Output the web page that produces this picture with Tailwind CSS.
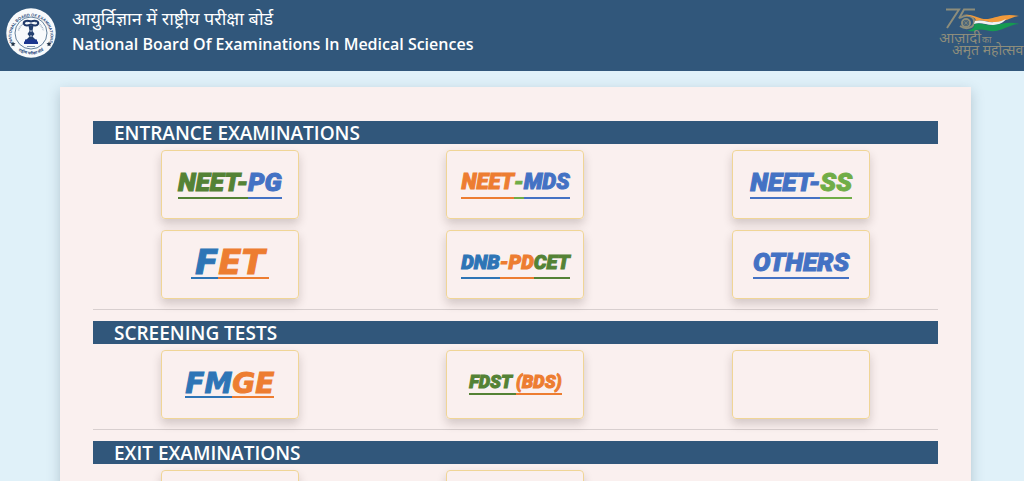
<!DOCTYPE html>
<html lang="en">
<head>
<meta charset="utf-8">
<meta name="viewport" content="width=device-width, initial-scale=1">
<title>National Board Of Examinations In Medical Sciences</title>
<script src="https://cdn.jsdelivr.net/npm/@tailwindcss/browser@4"></script>
</head>
<body class="bg-[#e0f1f9] font-['Open_Sans','Noto_Sans',sans-serif]">
<header class="flex h-[71px] items-start justify-between overflow-hidden bg-[#31577b] text-white">
  <div class="flex items-start gap-4 pl-1.5">
    <svg class="mt-2 size-[50px] shrink-0" viewBox="0 0 100 100" role="img" aria-label="NBEMS emblem">
      <defs>
        <path id="ringTop" d="M16 75A39 39 0 1 1 84 75"/>
        <path id="ringBottom" d="M20 81A44 44 0 0 0 80 81"/>
      </defs>
      <circle cx="50" cy="50" r="49.500" fill="#f8fafc"/>
      <circle cx="50" cy="50" r="32" fill="none" stroke="#31577b" stroke-width="1.500"/>
      <path d="M25 45A26 26 0 0 1 75 45" fill="none" stroke="#9fb0c4" stroke-width="3" stroke-dasharray="2 1.500"/>
      <g fill="#26477a" font-weight="700">
        <text font-size="8" font-family="Liberation Sans, sans-serif"><textPath href="#ringTop" startOffset="50%" text-anchor="middle">NATIONAL BOARD OF EXAMINATIONS</textPath></text>
        <text font-size="8" font-family="Noto Sans, sans-serif"><textPath href="#ringBottom" startOffset="50%" text-anchor="middle">राष्ट्रीय परीक्षा बोर्ड</textPath></text>
      </g>
      <path d="M14 67l1.500 3 3.500.5-2.500 2.500.5 3.500-3-1.500-3 1.500.5-3.500L9 70.500l3.500-.5zM86 67l1.500 3 3.500.5-2.500 2.500.5 3.500-3-1.500-3 1.500.5-3.500-2.500-2.500 3.500-.5z" fill="#26384d"/>
      <path d="M50 27c-10-4-16 0-14 5 2 4 9 3 14 1 5 2 12 3 14-1 2-5-4-9-14-5z" fill="none" stroke="#1e3768" stroke-width="4"/>
      <path d="M45 35h10l-2 11 4 6-4 5 7 7H40l7-7-4-5 4-6z" fill="#23406f"/>
      <circle cx="50" cy="46" r="1.500" fill="#f8fafc"/><circle cx="50" cy="56" r="1.500" fill="#f8fafc"/>
      <path d="M38 63h24v4h2v5H36v-5h2z" fill="#1d378e"/>
      <path d="M42 77h16" stroke="#8195ad" stroke-width="2"/>
    </svg>
    <div class="pt-1.5">
      <p class="text-lg leading-6">आयुर्विज्ञान में राष्ट्रीय परीक्षा बोर्ड</p>
      <h1 class="text-base leading-7 font-semibold whitespace-nowrap">National Board Of Examinations In Medical Sciences</h1>
    </div>
  </div>
  <svg class="h-[71px] w-[86px] shrink-0" viewBox="0 0 86 71" role="img" aria-label="Azadi Ka Amrit Mahotsav">
    <g fill="none" stroke="#8d8d7b">
      <path d="M8 9.500h13L9 28M37 9.500H26l-5 9" stroke-width="2"/>
      <path d="M22 18c8-5 15-1 14 5-1 5-8 7-14 3" stroke-width="2"/>
      <circle cx="28" cy="23" r="4" stroke-width="2"/>
      <path d="M28 18v10M23 23h10M25 20l6 6M31 20l-6 6" stroke-width=".6"/>
    </g>
    <path d="M25 15c11-2 16 5 25 4 8-1 15-6 31-3-9 1-14 6-23 6-9 1-12-3-21-1 3-3-6-6-12-6z" fill="#f19a3b"/>
    <path d="M37 21c8-2 12 2 20 1 5 0 8-2 11-3-3 4-8 6-13 6-8 0-12-3-19-1z" fill="#eef2f2"/>
    <path d="M36 24c8-2 12 2 19 1 9-1 16-4 26-1-10 1-15 6-23 7-8 1-13-3-20-1 1 2-4 1-9 1 6-2 8-4 7-7z" fill="#159a51"/>
    <g fill="#8d8d7b" font-family="Noto Sans, sans-serif">
      <text x="1" y="43" font-size="15">आज़ादी</text>
      <text x="44" y="43" font-size="9">का</text>
      <text x="14" y="55" font-size="14">अमृत महोत्सव</text>
    </g>
  </svg>
</header>

<main class="mt-4 mr-[53px] ml-[60px] bg-[#faf0ef] px-[33px] pt-[34px] pb-8 shadow-[0_4px_12px_rgba(40,70,90,0.25)]">
  <section class="border-b border-[#d8cfcf] pb-2.5">
    <h2 class="bg-[#31577b] pt-0.5 pl-[21px] text-[19px] leading-[21px] font-semibold text-white">ENTRANCE EXAMINATIONS</h2>
    <div class="-mx-1.5 mt-1.5 grid grid-cols-3 justify-items-center gap-y-[11px] font-['Roboto',sans-serif] font-black italic [-webkit-text-stroke:1px_currentColor]">
      <a href="#neet-pg" class="flex h-[69px] w-[138px] items-center justify-center rounded border border-[#f0d596] pb-1 text-[26px] leading-[30px] shadow-[0_5px_10px_rgba(60,40,40,0.2)]"><span class="border-b-2 border-[#548235] text-[#548235]">NEET-</span><span class="border-b-2 border-[#4472c4] text-[#4472c4]">PG</span></a>
      <a href="#neet-mds" class="flex h-[69px] w-[138px] items-center justify-center rounded border border-[#f0d596] pb-1 text-[22px] leading-[30px] shadow-[0_5px_10px_rgba(60,40,40,0.2)]"><span class="border-b-2 border-[#ed7d31] text-[#ed7d31]">NEET</span><span class="border-b-2 border-[#70ad47] text-[#70ad47]">-</span><span class="border-b-2 border-[#4472c4] text-[#4472c4]">MDS</span></a>
      <a href="#neet-ss" class="flex h-[69px] w-[138px] items-center justify-center rounded border border-[#f0d596] pb-1 text-[26px] leading-[30px] shadow-[0_5px_10px_rgba(60,40,40,0.2)]"><span class="border-b-2 border-[#4472c4] text-[#4472c4]">NEET-</span><span class="border-b-2 border-[#70ad47] text-[#70ad47]">SS</span></a>
      <a href="#fet" class="flex h-[69px] w-[138px] items-center justify-center rounded border border-[#f0d596] pb-1 font-['DejaVu_Sans',sans-serif] text-[34px] leading-[30px] shadow-[0_5px_10px_rgba(60,40,40,0.2)]"><span class="border-b-2 border-[#2e75b6] pl-1 text-[#2e75b6]">F</span><span class="border-b-2 border-[#ed7d31] pr-1 text-[#ed7d31]">ET</span></a>
      <a href="#dnb-pdcet" class="flex h-[69px] w-[138px] items-center justify-center rounded border border-[#f0d596] pb-1 text-[20px] leading-[30px] shadow-[0_5px_10px_rgba(60,40,40,0.2)]"><span class="border-b-2 border-[#2e75b6] text-[#2e75b6]">DNB</span><span class="border-b-2 border-[#ed7d31] text-[#ed7d31]">-PD</span><span class="border-b-2 border-[#548235] text-[#548235]">CET</span></a>
      <a href="#others" class="flex h-[69px] w-[138px] items-center justify-center rounded border border-[#f0d596] pb-1 text-[26px] leading-[30px] shadow-[0_5px_10px_rgba(60,40,40,0.2)]"><span class="border-b-2 border-[#4472c4] text-[#4472c4]">OTHERS</span></a>
    </div>
  </section>

  <section class="mt-[11px] border-b border-[#d8cfcf] pb-2.5">
    <h2 class="bg-[#31577b] pt-0.5 pl-[21px] text-[19px] leading-[21px] font-semibold text-white">SCREENING TESTS</h2>
    <div class="-mx-1.5 mt-1.5 grid grid-cols-3 justify-items-center gap-y-[11px] font-['Roboto',sans-serif] font-black italic [-webkit-text-stroke:1px_currentColor]">
      <a href="#fmge" class="flex h-[69px] w-[138px] items-center justify-center rounded border border-[#f0d596] font-['DejaVu_Sans',sans-serif] text-[28px] leading-[25px] shadow-[0_5px_10px_rgba(60,40,40,0.2)]"><span class="border-b-2 border-[#2e75b6] text-[#2e75b6]">FM</span><span class="border-b-2 border-[#ed7d31] text-[#ed7d31]">GE</span></a>
      <a href="#fdst" class="flex h-[69px] w-[138px] items-center justify-center rounded border border-[#f0d596] pb-1 text-[18px] leading-[22px] shadow-[0_5px_10px_rgba(60,40,40,0.2)]"><span class="border-b-2 border-[#548235] whitespace-pre text-[#548235]">FDST </span><span class="border-b-2 border-[#ed7d31] text-[#ed7d31]">(BDS)</span></a>
      <div class="h-[69px] w-[138px] rounded border border-[#f0d596] shadow-[0_5px_10px_rgba(60,40,40,0.2)]"></div>
    </div>
  </section>

  <section class="mt-[11px]">
    <h2 class="bg-[#31577b] pt-0.5 pl-[21px] text-[19px] leading-[21px] font-semibold text-white">EXIT EXAMINATIONS</h2>
    <div class="-mx-1.5 mt-1.5 grid grid-cols-3 justify-items-center">
      <div class="h-[69px] w-[138px] rounded border border-[#f0d596] shadow-[0_5px_10px_rgba(60,40,40,0.2)]"></div>
      <div class="h-[69px] w-[138px] rounded border border-[#f0d596] shadow-[0_5px_10px_rgba(60,40,40,0.2)]"></div>
    </div>
  </section>
</main>
</body>
</html>
